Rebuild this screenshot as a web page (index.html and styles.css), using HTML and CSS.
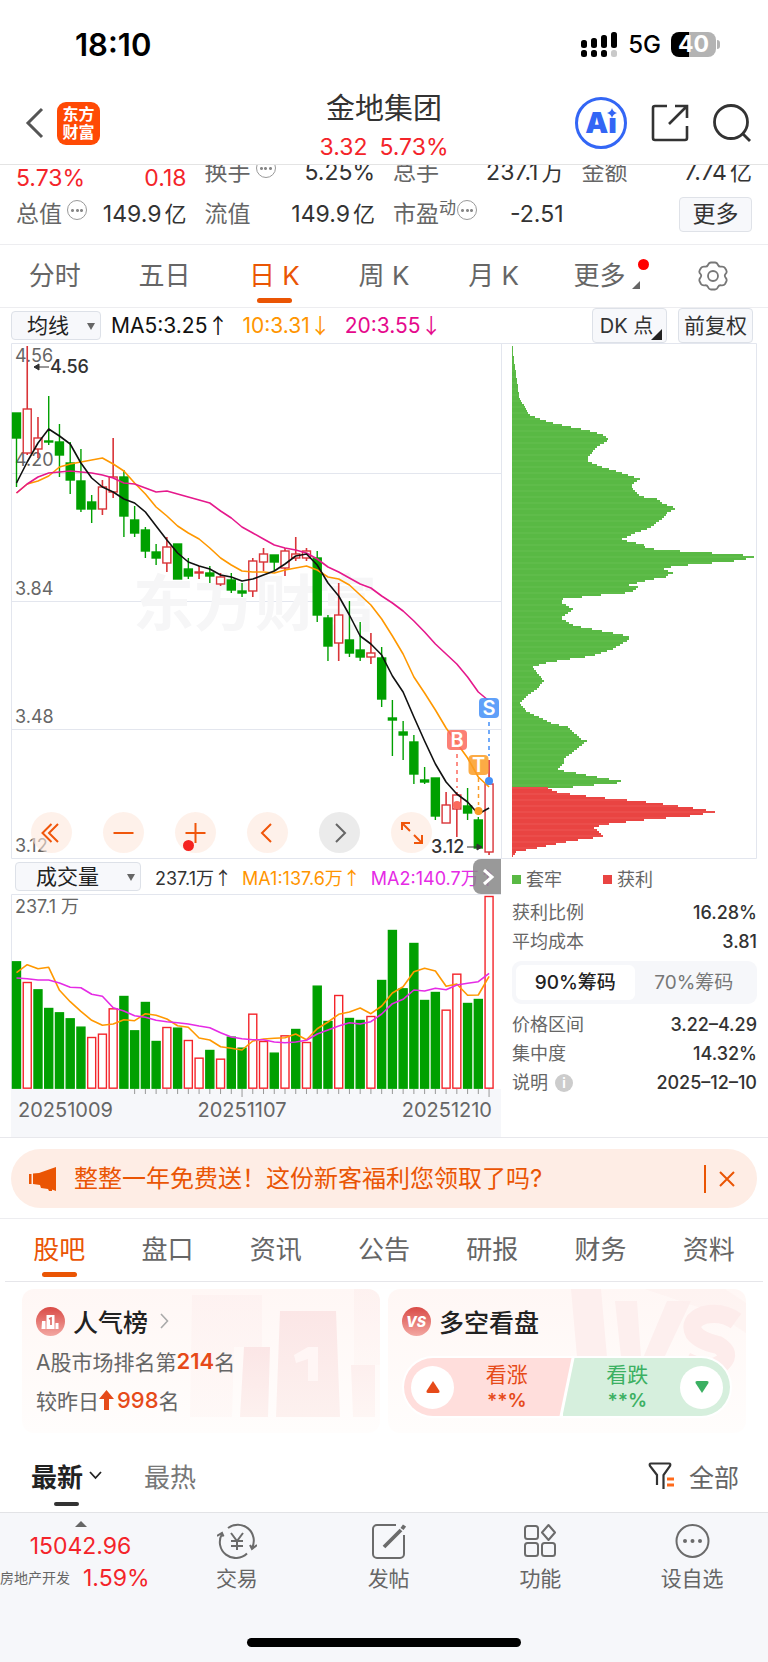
FILE: index.html
```html
<!DOCTYPE html>
<html lang="zh-CN">
<head>
<meta charset="utf-8">
<meta name="viewport" content="width=device-width, initial-scale=1">
<title>金地集团</title>
<link rel="stylesheet" href="styles.css">
</head>
<body>
<div class="status">
  <span class="clock">18:10</span>
  <div class="status-right">
    <svg class="signal" width="37" height="25" viewBox="0 0 37 25" aria-hidden="true">
      <g fill="#000"><rect x="0" y="8" width="6" height="8" rx="2.5"/><rect x="10" y="6" width="6" height="10" rx="2.5"/><rect x="20" y="3" width="6" height="13" rx="2.5"/><rect x="30" y="0" width="6" height="16" rx="2.5"/><rect x="0" y="18" width="6" height="7" rx="2.5"/><rect x="10" y="18" width="6" height="7" rx="2.5"/><rect x="20" y="18" width="6" height="7" rx="2.5"/></g>
      <rect x="30" y="18" width="6" height="7" rx="2.5" fill="#c9c9c9"/>
    </svg>
    <span class="network">5G</span>
    <span class="battery">40</span>
  </div>
</div>

<header class="header">
  <div class="header-left">
    <button class="icon-btn" aria-label="返回"><svg width="20" height="32" viewBox="0 0 20 32" fill="none" stroke="#555" stroke-width="3"><path d="M17 2 3 16l14 14"/></svg></button>
    <div class="logo"><span>东方</span><span>财富</span></div>
  </div>
  <div class="header-title">
    <h1>金地集团</h1>
    <p class="up"><span>3.32</span><span>5.73%</span></p>
  </div>
  <div class="header-right">
    <button class="icon-btn ai" aria-label="AI助手">Ai<svg width="10" height="10" viewBox="0 0 10 10" fill="#3366f5" aria-hidden="true"><path d="M5 0Q6 4 10 5Q6 6 5 10Q4 6 0 5Q4 4 5 0z"/></svg></button>
    <button class="icon-btn" aria-label="分享"><svg width="38" height="38" viewBox="0 0 38 38" fill="none" stroke="#333" stroke-width="2.6"><path d="M16 2H4a2 2 0 0 0-2 2v30a2 2 0 0 0 2 2h30a2 2 0 0 0 2-2V22M24 2h12v12M36 2 18 20"/></svg></button>
    <button class="icon-btn" aria-label="搜索"><svg width="38" height="38" viewBox="0 0 38 38" fill="none" stroke="#333" stroke-width="2.8"><circle cx="18" cy="18" r="16.5"/><path d="m29 29 8 8"/></svg></button>
  </div>
</header>

<section class="quotes">
  <div class="quote-grid">
    <div class="quote change up"><span>5.73%</span><span>0.18</span></div>
    <div class="quote"><span class="name">换手<i class="more-dot"></i></span><span>5.25%</span></div>
    <div class="quote"><span class="name">总手</span><span>237.1<small>万</small></span></div>
    <div class="quote"><span class="name">金额</span><span>7.74<small>亿</small></span></div>
    <div class="quote"><span class="name">总值<i class="more-dot"></i></span><span>149.9<small>亿</small></span></div>
    <div class="quote"><span class="name">流值</span><span>149.9<small>亿</small></span></div>
    <div class="quote neg"><span class="name">市盈<sup>动</sup><i class="more-dot"></i></span><span>-2.51</span></div>
    <div class="quote end"><button class="more-btn">更多</button></div>
  </div>
</section>

<nav class="period-tabs">
  <button>分时</button>
  <button>五日</button>
  <button class="active">日 K</button>
  <button>周 K</button>
  <button>月 K</button>
  <button><span class="with-badge">更多</span></button>
  <button aria-label="设置"><svg width="30" height="30" viewBox="0 0 30 30" fill="none" stroke="#777" stroke-width="1.8" stroke-linejoin="round"><path d="M10 4Q11 1.500 13 1.500h4Q19 1.500 20 4q1 2 3 1.600 3-.4 4 1.400l1.300 2.300q1 2-.7 3.500-1.600 1.700 0 3.900 1.700 2 .7 3.800L27 23q-1 1.700-4 1.300-2-.3-3 1.700-1 2.500-3 2.500h-4q-2 0-3-2.500-1-2-3-1.700-3 .4-4-1.300l-1.300-2.500q-1-1.800.7-3.800 1.600-2.200 0-3.900-1.700-1.500-.7-3.500L3 7q1-1.800 4-1.400 2 .4 3-1.600z"/><circle cx="15" cy="15" r="5"/></svg></button>
</nav>

<div class="ma-bar">
  <div class="select-box ma-select"><select aria-label="主图指标"><option>均线</option></select></div>
  <span class="ma5">MA5:3.25<b class="arr">↑</b></span>
  <span class="ma10">10:3.31<b class="arr">↓</b></span>
  <span class="ma20">20:3.55<b class="arr">↓</b></span>
  <div class="ma-actions">
    <button class="dk">DK 点</button>
    <button>前复权</button>
  </div>
</div>

<main class="charts">
  <div class="chart-col">
    <div class="kline">
      <svg id="kline" viewBox="0 0 490 516" role="img" aria-label="日K线图">
        <path class="grid" d="M0 130.500H490M0 258.500H490M0 386.500H490"/>
        <path class="frame" d="M490.500.5H.5V515.500H490"/>
        <text class="watermark" x="122" y="283">东方财富</text>
        <text class="axis-text" x="4" y="19">4.56</text>
        <text class="axis-text" x="4" y="123">4.20</text>
        <text class="axis-text" x="4" y="252">3.84</text>
        <text class="axis-text" x="4" y="380">3.48</text>
        <text class="axis-text" x="4" y="509">3.12</text>
        <g id="candles"></g>
        <g id="ma-lines"></g>
        <g class="mark"><path d="M23 24H38M28 21 23 24l5 3z"/><text x="39" y="30">4.56</text></g>
        <g class="mark"><path d="M456 504H470M466 501l5 3-5 3z"/><text x="420" y="510">3.12</text></g>
        <g class="flag flag-s"><path d="M478 379V413"/><circle cx="478" cy="438" r="4"/><rect x="468" y="355" width="20" height="20" rx="4"/><text x="478" y="372">S</text></g>
        <g class="flag flag-b"><path d="M446 411V445"/><circle cx="446" cy="462" r="4"/><rect x="436" y="387" width="20" height="20" rx="4"/><text x="446" y="404">B</text></g>
        <g class="flag flag-t"><path d="M467.500 435V462"/><circle cx="467.500" cy="468" r="4"/><rect x="457.500" y="412" width="20" height="20" rx="4"/><text x="467.500" y="429">T</text></g>
      </svg>
      <div class="chart-tools">
        <button aria-label="快退"><svg viewBox="0 0 41 41"><path d="M20.500 12l-9 9 9 9M27 12l-9 9 9 9"/></svg></button>
        <button aria-label="缩小"><svg viewBox="0 0 41 41"><path d="M10.500 21h20"/></svg></button>
        <button class="dot" aria-label="放大"><svg viewBox="0 0 41 41"><path d="M10.500 21h20M20.500 11v20"/></svg></button>
        <button aria-label="左移"><svg viewBox="0 0 41 41"><path d="M24 12l-9 9 9 9"/></svg></button>
        <button class="gray" aria-label="右移"><svg viewBox="0 0 41 41"><path d="M17 12l9 9-9 9"/></svg></button>
        <button aria-label="全屏"><svg viewBox="0 0 41 41"><path d="M11 18v-7h8M11 11l8 8M23 23l8 8M31 23v8h-8"/></svg></button>
      </div>
    </div>
    <div class="vol-bar">
      <div class="select-box vol-select"><select aria-label="副图指标"><option>成交量</option></select></div>
      <span>237.1万<b class="arr">↑</b></span>
      <span class="ma10">MA1:137.6万<b class="arr">↑</b></span>
      <span class="vol-ma2">MA2:140.7万<b class="arr">↑</b></span>
      <button class="vol-next" aria-label="展开"><svg width="28" height="36" viewBox="0 0 28 36" fill="none" stroke="#fff" stroke-width="3"><path d="M11 11l8 7-8 7"/></svg></button>
    </div>
    <svg id="volume" viewBox="0 0 490 195" role="img" aria-label="成交量">
      <path class="frame" d="M490.500 195V.5H.5V195"/>
      <text class="axis-text" x="4" y="19">237.1 万</text>
      <g id="vol-bars"></g>
      <g id="vol-lines"></g>
    </svg>
    <svg id="dates" viewBox="0 0 490 48" role="img" aria-label="日期">
      <g id="ticks"></g>
      <text class="date" x="7" y="28">20251009</text>
      <text class="date middle" x="231" y="28">20251107</text>
      <text class="date end" x="481" y="28">20251210</text>
    </svg>
  </div>

  <aside class="chip-col">
    <svg id="chips" viewBox="0 0 256 516" role="img" aria-label="筹码分布">
      <path class="frame" d="M0 .5H255.500V515.500H0M.5 0V516"/>
    </svg>
    <div class="legend"><span class="trapped">套牢</span><span class="profit">获利</span></div>
    <dl class="stats">
      <div><dt>获利比例</dt><dd>16.28%</dd></div>
      <div><dt>平均成本</dt><dd>3.81</dd></div>
    </dl>
    <div class="segment"><button class="active">90%筹码</button><button>70%筹码</button></div>
    <dl class="stats">
      <div><dt>价格区间</dt><dd>3.22–4.29</dd></div>
      <div><dt>集中度</dt><dd>14.32%</dd></div>
      <div><dt>说明<i class="info">i</i></dt><dd>2025–12–10</dd></div>
    </dl>
  </aside>
</main>

<section class="banner-wrap">
  <div class="banner">
    <svg width="28" height="24" viewBox="0 0 28 24" fill="#ea5504" aria-hidden="true"><rect x="0" y="7" width="2.500" height="10"/><path d="M4 6.500 10 6 27 0v24l-4-1.500V24h-3l-1-2-7-1-1-3-7-1z"/></svg>
    <a href="#">整整一年免费送！这份新客福利您领取了吗?</a>
    <button aria-label="关闭"><svg width="16" height="16" viewBox="0 0 16 16" stroke="#ea5504" stroke-width="2"><path d="M1 1l14 14M15 1 1 15"/></svg></button>
  </div>
</section>

<nav class="info-tabs">
  <button class="active">股吧</button>
  <button>盘口</button>
  <button>资讯</button>
  <button>公告</button>
  <button>研报</button>
  <button>财务</button>
  <button>资料</button>
</nav>

<section class="cards">
  <article class="card">
    <svg class="card-art" width="190" height="144" viewBox="0 0 190 144" aria-hidden="true"><defs><linearGradient id="fade" x2="0" y2="1"><stop stop-color="#fdefee"/><stop offset="1" stop-color="#fef6f4"/></linearGradient><linearGradient id="fade2" x2="0" y2="1"><stop stop-color="#fbe6e6"/><stop offset="1" stop-color="#fdf1ef"/></linearGradient></defs><g fill="url(#fade)"><path d="M2 6h70v52H44l-2 70H0z" opacity=".6"/><path d="M54 58h26l-2 70H50z" fill="url(#fade2)"/><path d="M90 22h56l4 106H86z" fill="url(#fade2)"/><path d="M164 0h26v76h-26z" opacity=".7"/><path d="M161 76h24v52h-22z"/></g><path d="M104 66l14-8h10v34h-10V70l-12 4z" fill="#fff6f5"/></svg>
    <h2><svg width="29" height="29" viewBox="0 0 29 29" aria-hidden="true"><defs><linearGradient id="g1" x2="0" y2="1"><stop stop-color="#d94b46"/><stop offset="1" stop-color="#f3a7a2"/></linearGradient></defs><circle cx="14.500" cy="14.500" r="14.500" fill="url(#g1)"/><path d="M10.500 8h8v14h-8zM6 14h3.500v8H5.500zM19.500 16h3v6h-3z" fill="#fff"/><path d="M13 12l2-1v7" fill="none" stroke="#dc6560" stroke-width="1.600"/></svg>人气榜<svg width="9" height="16" viewBox="0 0 9 16" fill="none" stroke="#aaa" stroke-width="1.600" aria-hidden="true"><path d="M1 1l6.500 7L1 15"/></svg></h2>
    <p>A股市场排名第<b>214</b>名</p>
    <p>较昨日<svg width="15" height="20" viewBox="0 0 15 20" fill="#e64a19" aria-hidden="true"><path d="M7.500 0 15 9h-5v11H5V9H0z"/></svg><b class="mid">998</b>名</p>
  </article>
  <article class="card">
    <svg class="card-art" width="175" height="144" viewBox="0 0 175 144" aria-hidden="true"><g fill="#fdefee"><path d="M0 0h30l6 68H6zM44 12h22l4 56H50zM96 12h24L84 88H64z"/><path d="M74 0h80l21 14v30l-30-20z" opacity=".5"/></g><path d="M165 32q-14-10-32-6-16 6-10 18 6 8 24 12 14 8 4 18-12 10-36-2" fill="none" stroke="#fdeceb" stroke-width="18"/></svg>
    <h2><svg width="29" height="29" viewBox="0 0 29 29" aria-hidden="true"><circle cx="14.500" cy="14.500" r="14.500" fill="url(#g1)"/><text x="14" y="20" class="vs">VS</text></svg>多空看盘</h2>
    <div class="vote">
      <button class="vote-up"><i><svg width="14" height="12" viewBox="0 0 14 12" fill="#e64a19"><path d="M7 0l6.500 10q.5 2-1.500 2H2Q0 12 .5 10z"/></svg></i><span>看涨<em>**%</em></span></button>
      <button class="vote-down"><span>看跌<em>**%</em></span><i><svg width="14" height="12" viewBox="0 0 14 12" fill="#3bb062"><path d="M7 12 .5 2Q0 0 2 0h10q2 0 1.500 2z"/></svg></i></button>
    </div>
  </article>
</section>

<section class="feed-bar">
  <button class="active">最新<svg width="13" height="9" viewBox="0 0 13 9" fill="none" stroke="#222" stroke-width="1.800" aria-hidden="true"><path d="M1 1l5.500 6L12 1"/></svg></button>
  <button>最热</button>
  <button class="filter"><svg width="26" height="28" viewBox="0 0 26 28" fill="none" stroke="#333" stroke-width="2.200" aria-hidden="true"><path d="M9 23V13L2 4q-1-2.500 1-2.500h18q2 0 1 2.500l-6.500 9v14"/><path d="M19 17h7M19 23h7" stroke="#ff6a1a" stroke-width="3"/></svg>全部</button>
</section>

<footer class="bottom">
  <div class="toolbar">
    <a class="index" href="#">
      <i class="tri"></i>
      <strong>15042.96</strong>
      <span><small>房地产开发</small>1.59%</span>
    </a>
    <a href="#"><svg width="40" height="36" viewBox="0 0 40 36" fill="none" stroke="#6b6b6b" stroke-width="2"><path d="M11 5A16 16 0 0 1 35 25M30 30.500A16 16 0 0 1 5 11M0 13l5-3 1.500 3.500M40 22l-5 4-2-4M14 10l6 8 6-8M20 18v9M14 18h12M14 23h12"/></svg>交易</a>
    <a href="#"><svg width="34" height="36" viewBox="0 0 34 36" fill="none" stroke="#6b6b6b" stroke-width="2"><path d="M24 2H5a4 4 0 0 0-4 4v25a4 4 0 0 0 4 4h23a4 4 0 0 0 4-4V12"/><path d="M12 24 29 7M30 6l2.500-3.500" stroke-width="3.800"/></svg>发帖</a>
    <a href="#"><svg width="32" height="34" viewBox="0 0 32 34" fill="none" stroke="#6b6b6b" stroke-width="2"><rect x="1" y="2" width="13" height="13" rx="2.500"/><rect x="1" y="19" width="13" height="13" rx="2.500"/><rect x="18" y="19" width="13" height="13" rx="2.500"/><path d="M24.500 1 31 8.500l-6.500 7.500L18 8.500z" stroke-linejoin="round"/></svg>功能</a>
    <a href="#"><svg width="35" height="35" viewBox="0 0 35 35" fill="none" stroke="#6b6b6b" stroke-width="2"><circle cx="17.500" cy="17.500" r="16"/><g fill="#6b6b6b" stroke="none"><circle cx="10" cy="17.500" r="2"/><circle cx="17.500" cy="17.500" r="2"/><circle cx="25" cy="17.500" r="2"/></g></svg>设自选</a>
  </div>
  <div class="home"></div>
</footer>
<script src="chart.js"></script>
</body>
</html>
```
FILE: styles.css
```css
* { box-sizing: border-box; }
body {
  margin: 0;
  background: #fff;
  color: #333;
  font-family: Inter, "Noto Sans CJK SC", sans-serif;
  font-size: 22px;
}
button, select {
  font: inherit;
  color: inherit;
  border: 0;
  padding: 0;
  background: none;
}
h1, h2, p, dl, dd { margin: 0; font-weight: 400; }
a { color: inherit; text-decoration: none; }
i, em { font-style: normal; }
svg { display: block; flex: none; }
.up { color: #f4242a; }

/* status bar */
.status {
  display: flex;
  justify-content: space-between;
  align-items: center;
  height: 88px;
  padding: 0 52px 0 75px;
  color: #000;
}
.clock { font-size: 31px; font-weight: 600; }
.status-right { display: flex; align-items: center; gap: 10px; }
.network { font-size: 24px; font-weight: 500; }
.battery {
  position: relative;
  width: 45px;
  height: 25px;
  border-radius: 8px;
  background: linear-gradient(90deg, #000 40%, #b3b3b3 40%);
  color: #fff;
  font-size: 23px;
  font-weight: 700;
  line-height: 25px;
  text-align: center;
}
.battery::after {
  content: "";
  position: absolute;
  left: 46px;
  top: 8px;
  width: 3px;
  height: 9px;
  border-radius: 0 3px 3px 0;
  background: #b3b3b3;
}

/* header */
.header {
  display: grid;
  grid-template-columns: 1fr auto 1fr;
  height: 77px;
  padding: 0 17px;
  border-bottom: 1px solid #e4e4e4;
}
.header-left, .header-right { display: flex; align-items: center; padding-bottom: 8px; }
.header-left { gap: 12px; padding-left: 8px; }
.header-right { justify-content: flex-end; gap: 24px; }
.header-title { text-align: center; padding-top: 2px; }
.header-title h1 { font-size: 29px; line-height: 38px; }
.header-title p { display: flex; justify-content: center; gap: 12px; font-size: 23px; line-height: 38px; }
.logo {
  display: flex;
  flex-direction: column;
  align-items: center;
  justify-content: center;
  width: 43px;
  height: 43px;
  border-radius: 9px;
  background: #ff4a05;
  color: #fff;
  font-size: 16px;
  font-weight: 700;
  line-height: 18px;
}
.ai {
  position: relative;
  width: 52px;
  height: 52px;
  border: 3px solid #3366f5;
  border-radius: 50%;
  color: #3366f5;
  font-size: 29px;
  font-weight: 900;
  line-height: 46px;
}
.ai svg { position: absolute; right: 7px; top: 8px; background: #fff; }

/* quotes */
.quotes { height: 79px; overflow: hidden; }
.quote-grid {
  display: grid;
  grid-template-columns: repeat(4, 1fr);
  grid-auto-rows: 42px;
  column-gap: 18px;
  margin-top: -14px;
  padding: 0 16px;
}
.quote { display: flex; justify-content: space-between; align-items: center; font-size: 23px; line-height: 42px; white-space: nowrap; }
.quote small { font-size: 22px; margin-left: 3px; }
.quote .name { display: flex; color: #666; }
.quote.change { padding-top: 12px; }
.quote.end { justify-content: flex-end; }
.quote sup { font-size: 17px; line-height: 30px; vertical-align: top; }
.more-dot {
  width: 20px;
  height: 20px;
  margin: 7px 0 0 5px;
  border: 1px solid #999;
  border-radius: 50%;
  background: radial-gradient(circle, #888 1px, transparent 2px) center / 5px 5px no-repeat, radial-gradient(circle, #888 1px, transparent 2px) 2px center / 5px 5px no-repeat, radial-gradient(circle, #888 1px, transparent 2px) 11px center / 5px 5px no-repeat;
}
.quote sup + .more-dot { margin-left: 1px; }
.more-btn {
  width: 73px;
  height: 35px;
  border: 1px solid #dfe2e8;
  border-radius: 4px;
  background: #f7f8fb;
  font-size: 23px;
  line-height: 32px;
}

/* tab rows */
.period-tabs, .info-tabs {
  display: grid;
  grid-template-columns: repeat(7, 1fr);
  border-top: 1px solid #ededf0;
  border-bottom: 1px solid #ededf0;
  color: #666;
  font-size: 26px;
}
.period-tabs button, .info-tabs button {
  position: relative;
  display: flex;
  align-items: center;
  justify-content: center;
  height: 62px;
  line-height: 62px;
}
.period-tabs .active, .info-tabs .active { color: #ea5504; }
.period-tabs .active::after, .info-tabs .active::after {
  content: "";
  position: absolute;
  bottom: 4px;
  width: 35px;
  height: 5px;
  border-radius: 3px;
  background: #ea5504;
}
.with-badge { position: relative; padding-right: 8px; }
.with-badge::before {
  content: "";
  position: absolute;
  right: -16px;
  top: 14px;
  width: 11px;
  height: 11px;
  border-radius: 50%;
  background: #f00;
}
.with-badge::after {
  content: "";
  position: absolute;
  right: -7px;
  top: 36px;
  border-left: 8px solid transparent;
  border-bottom: 8px solid #666;
}

/* indicator bar */
.ma-bar { display: flex; align-items: center; height: 35px; padding: 0 15px 0 11px; font-size: 21px; white-space: nowrap; }
.arr { font-weight: 400; font-family: "Noto Sans CJK SC", sans-serif; display: inline-block; width: 18px; line-height: 1; text-align: center; }
.select-box {
  position: relative;
  height: 29px;
  border: 1px solid #dde1e8;
  border-radius: 4px;
  background: #f7f8fb;
}
.select-box select { width: 100%; height: 27px; appearance: none; color: #222; font-size: 21px; line-height: 27px; }
.select-box::after {
  content: "";
  position: absolute;
  right: 5px;
  top: 11px;
  border: 4px solid transparent;
  border-top: 7px solid #666;
  border-bottom: 0;
  pointer-events: none;
}
.ma-select { width: 90px; }
.ma-select select { padding-left: 15px; }
.ma5 { margin-left: 10px; color: #111; }
.ma10 { color: #ff9500; }
.ma20 { color: #e5098c; }
.ma-bar .ma10, .ma-bar .ma20 { margin-left: 17px; }
.ma-actions { display: flex; gap: 11px; margin-left: auto; }
.ma-actions button {
  position: relative;
  width: 75px;
  height: 35px;
  border: 1px solid #dde1e8;
  border-radius: 4px;
  background: #f7f8fb;
  font-size: 21px;
  line-height: 32px;
}
.ma-actions .dk { padding-right: 6px; font-size: 20px; }
.dk::after {
  content: "";
  position: absolute;
  right: 4px;
  bottom: 2px;
  border-left: 11px solid transparent;
  border-bottom: 11px solid #222;
}

/* charts */
.charts {
  display: grid;
  grid-template-columns: 490fr 256fr;
  padding: 0 11px;
  border-bottom: 1px solid #e8e8ec;
}
.charts > * { min-width: 0; }
.charts svg text { font-family: Inter, "Noto Sans CJK SC", sans-serif; }
.kline { position: relative; }
#kline, #volume, #chips, #dates { width: 100%; height: auto; }
.grid, .frame { fill: none; stroke: #e3e6ee; stroke-width: 1; }
.axis-text { font-size: 18px; fill: #666; }
.watermark { font-size: 61px; font-weight: 700; fill: #f6f6f7; }
.line { fill: none; stroke-width: 1.6; stroke-linejoin: round; }
.line-ma5 { stroke: #111; }
.line-ma10 { stroke: #ff9800; }
.line-ma20 { stroke: #e5198c; }
.line-vol { stroke: #e52be5; }
.fall { fill: #00a000; stroke: #00a000; stroke-width: 1.4; }
.rise { fill: #fff; stroke: #d93438; stroke-width: 1.4; }
.rise-wick { stroke: #d93438; stroke-width: 1.6; }
.vol-rise { fill: #fff; stroke: #f4242a; stroke-width: 1.4; }
.mark { fill: #333; stroke: #333; }
.mark text { stroke: none; font-size: 18px; font-weight: 500; }
.flag path { fill: none; stroke-width: 1.5; stroke-dasharray: 4 4; }
.flag rect { opacity: .85; }
.flag text { fill: #fff; font-size: 20px; font-weight: 600; text-anchor: middle; }
.flag-s { fill: #438ff8; }
.flag-s path { stroke: #438ff8; }
.flag-b { fill: #fb6a5e; }
.flag-b path { stroke: #fb6a5e; }
.flag-t { fill: #fb9c25; }
.flag-t path { stroke: #fb9c25; }
.chart-tools { position: absolute; left: 20px; bottom: 6px; display: flex; gap: 31px; }
.chart-tools button { position: relative; width: 41px; height: 41px; border-radius: 50%; background: rgba(253, 231, 220, .6); }
.chart-tools svg { fill: none; stroke: #f0560b; stroke-width: 2; }
.chart-tools .gray { background: rgba(222, 222, 222, .6); }
.chart-tools .gray svg { stroke: #666; }
.dot::after {
  content: "";
  position: absolute;
  left: 8px;
  bottom: 2px;
  width: 11px;
  height: 11px;
  border-radius: 50%;
  background: #f5221f;
}
.vol-bar { position: relative; display: flex; align-items: center; height: 35px; padding-left: 4px; font-size: 18px; white-space: nowrap; overflow: hidden; }
.vol-select { width: 126px; margin-right: 14px; }
.vol-select select { padding-left: 20px; }
.vol-bar .ma10, .vol-ma2 { margin-left: 10px; }
.vol-ma2 { color: #e52be5; }
.vol-next { position: absolute; right: 0; top: 0; height: 35px; border-radius: 8px 0 0 8px; background: rgba(135, 135, 135, .85); }
#dates { background: #f6f7fa; }
.tick { stroke: #999; }
.date { fill: #666; font-size: 20px; }
.date.middle { text-anchor: middle; }
.date.end { text-anchor: end; }

/* chip panel */
.green-bar { fill: #59b944; }
.green-bar.alt { fill: #5fbc4a; }
.red-bar { fill: #e94442; }
.red-bar.alt { fill: #eb4d4b; }
.green-bar, .red-bar { shape-rendering: crispEdges; }
.legend, .stats, .segment { margin-left: 11px; }
.legend { display: flex; height: 39px; padding-bottom: 2px; align-items: center; color: #666; font-size: 18px; }
.legend span { width: 91px; }
.legend span::before { content: ""; display: inline-block; width: 9px; height: 9px; margin-right: 5px; background: #59b944; vertical-align: 2px; }
.legend .profit::before { background: #e94442; }
.stats div { display: flex; justify-content: space-between; font-size: 18px; line-height: 29px; }
.stats dt { display: flex; align-items: center; color: #666; }
.stats dd { font-weight: 500; }
.info { width: 18px; height: 18px; margin-left: 7px; border-radius: 50%; background: #ccc; color: #fff; font-size: 13px; font-weight: 700; line-height: 18px; text-align: center; }
.segment { display: flex; height: 43px; margin-top: 5px; margin-bottom: 6px; padding: 4px; border-radius: 9px; background: #f6f7fa; font-size: 19px; line-height: 35px; }
.segment button { flex: 1; border-radius: 6px; color: #777; }
.segment .active { background: #fff; color: #222; font-weight: 500; }

/* banner */
.banner-wrap { padding: 11px 11px 10px; }
.banner { display: flex; align-items: center; height: 59px; padding: 0 22px 0 18px; border-radius: 30px; background: #feede5; color: #ea5504; }
.banner a { flex: 1; margin-left: 17px; font-size: 24px; line-height: 36px; }
.banner button { padding: 6px 0 6px 13px; border-left: 2px solid #ea5504; }
.info-tabs { padding: 0 5px; border-bottom: 0; }
.info-tabs::after { content: ""; grid-column: 1 / -1; height: 1px; background: #e6e6ea; }

/* cards */
.cards { display: grid; grid-template-columns: 1fr 1fr; gap: 8px; padding: 7px 22px 0; }
.card { position: relative; overflow: hidden; height: 144px; padding: 12px 14px; border-radius: 12px; background: linear-gradient(#fff7f5, #fffdfc); }
.card-art { position: absolute; right: 0; top: 0; }
.card h2, .card p, .vote { position: relative; }
.card h2 { display: flex; align-items: center; gap: 8px; height: 40px; color: #222; font-size: 25px; font-weight: 500; }
.card h2 svg + svg { margin-left: 4px; }
.card p { display: flex; align-items: center; height: 39px; color: #666; font-size: 21px; }
.card p b { color: #e64a19; font-size: 22px; font-weight: 600; }
.card .mid { margin-left: 3px; font-weight: 500; }
.vs { fill: #fff; font-size: 14px; font-weight: 800; font-style: italic; text-anchor: middle; }
.vote { display: flex; margin-top: 15px; height: 62px; padding: 2px; border-radius: 31px; background: #fff; }
.vote button { display: flex; align-items: center; flex: 1; height: 58px; color: #e64a19; font-size: 21px; line-height: 26px; }
.vote i { display: flex; align-items: center; justify-content: center; width: 43px; height: 43px; border-radius: 50%; background: #fff; }
.vote span { flex: 1; text-align: center; }
.vote em { display: block; font-weight: 600; font-size: 19px; line-height: 25px; }
.vote-up { padding: 0 12px 0 7px; border-radius: 29px 0 0 29px; background: #ffdedc; clip-path: polygon(0 0, 100% 0, calc(100% - 12px) 100%, 0 100%); }
.vote .vote-down { margin-left: -9px; padding: 0 7px 0 12px; border-radius: 0 29px 29px 0; background: #d6efdd; color: #3bb062; clip-path: polygon(12px 0, 100% 0, 100% 100%, 0 100%); }

/* feed bar */
.feed-bar { display: flex; height: 79px; padding: 6px 29px 0 31px; color: #777; font-size: 26px; }
.feed-bar button { position: relative; display: flex; align-items: center; height: 73px; margin-right: 42px; }
.feed-bar .active { gap: 6px; color: #222; font-weight: 700; }
.feed-bar .active::after { content: ""; position: absolute; left: 23px; bottom: 6px; width: 25px; height: 4px; border-radius: 2px; background: #333; }
.feed-bar .filter { gap: 15px; margin: 0 0 0 auto; font-size: 25px; color: #666; }

/* bottom bar */
.bottom { min-height: 150px; border-top: 1px solid #e2e3e6; background: #f6f7fa; }
.toolbar { display: grid; grid-template-columns: 161px repeat(4, 1fr); }
.toolbar a { display: flex; flex-direction: column; align-items: center; height: 88px; padding-top: 10px; color: #666; font-size: 21px; line-height: 32px; }
.toolbar a > svg { height: 36px; margin-bottom: 4px; }
.toolbar .index { align-items: stretch; color: #f4242a; font-size: 23px; text-align: center; padding-top: 8px; }
.index strong { font-weight: 400; line-height: 38px; }
.index span { display: flex; align-items: center; gap: 13px; line-height: 26px; }
.index small { color: #666; font-size: 14px; white-space: nowrap; }
.tri { align-self: center; border: 6px solid transparent; border-top: 0; border-bottom: 6px solid #666; }
.home { width: 274px; height: 9px; margin: 37px auto 0; border-radius: 5px; background: #000; }
```
FILE: chart.js
```js
const NS = "http://www.w3.org/2000/svg";
const STEP = 10.74;
const FIRST = 5.5;
const xAt = (i) => FIRST + i * STEP;

function add(parent, tag, attrs) {
  const node = document.createElementNS(NS, tag);
  for (const key in attrs) node.setAttribute(key, attrs[key]);
  document.getElementById(parent).appendChild(node);
}

function line(parent, cls, values) {
  add(parent, "polyline", {
    class: "line " + cls,
    points: values.map((v, i) => xAt(i).toFixed(1) + "," + v.toFixed(1)).join(" "),
  });
}

/* direction, high, body top, body bottom, low */
const candles = [
  ["g", 70, 70, 95, 144], ["r", 3, 66, 110, 112], ["r", 74, 95, 106, 115], ["g", 53, 98, 99, 102],
  ["g", 81, 99, 112, 134], ["g", 99, 120, 137, 151], ["g", 106, 138, 166, 169], ["g", 152, 159, 166, 180],
  ["r", 137, 144, 166, 172], ["r", 95, 134, 149, 155], ["g", 127, 134, 173, 194], ["g", 163, 177, 190, 194],
  ["g", 184, 187, 208, 215], ["g", 201, 209, 215, 222], ["r", 194, 204, 220, 229], ["g", 201, 201, 236, 236],
  ["g", 215, 226, 233, 236], ["r", 223, 229, 230, 236], ["g", 223, 230, 233, 240], ["r", 230, 234, 241, 243],
  ["g", 230, 237, 247, 250], ["g", 240, 248, 250, 254], ["r", 215, 218, 248, 254], ["r", 205, 211, 219, 228],
  ["g", 212, 212, 219, 228], ["r", 205, 208, 225, 233], ["r", 194, 211, 215, 218], ["r", 205, 208, 215, 218],
  ["g", 208, 215, 272, 279], ["g", 272, 275, 303, 318], ["r", 240, 272, 300, 318], ["g", 258, 297, 310, 314],
  ["g", 279, 307, 314, 318], ["r", 290, 310, 314, 321], ["g", 304, 315, 356, 364], ["g", 357, 375, 377, 413],
  ["g", 378, 389, 392, 417], ["g", 392, 399, 431, 441], ["g", 424, 437, 439, 441], ["g", 435, 435, 473, 477],
  ["r", 449, 462, 480, 480], ["r", 449, 452, 466, 494], ["g", 445, 463, 470, 477], ["g", 474, 477, 505, 505],
  ["r", 417, 441, 509, 512],
];

candles.forEach(([dir, high, top, bottom, low], i) => {
  const x = xAt(i);
  const rise = dir === "r";
  add("candles", "path", {
    class: rise ? "rise-wick" : "fall",
    d: `M${x} ${high}V${top}M${x} ${bottom}V${low}`,
  });
  add("candles", "rect", {
    class: rise ? "rise" : "fall",
    x: x - 4, y: top, width: 8, height: Math.max(bottom - top, 0.5),
  });
});

line("ma-lines", "line-ma10", [150, 141, 138, 133, 124, 121, 119, 117, 115, 121, 128, 140, 151, 164, 173, 183, 190, 196, 205, 215, 222, 228, 229, 229, 230, 227, 225, 223, 227, 234, 236, 242, 252, 262, 276, 293, 311, 334, 350, 367, 385, 400, 415, 434, 444]);
line("ma-lines", "line-ma20", [150, 141, 134, 130, 129, 128, 129, 130, 132, 135, 140, 141, 145, 149, 148, 151, 154, 157, 160, 168, 175, 184, 190, 196, 202, 205, 207, 210, 216, 224, 229, 235, 241, 245, 253, 260, 268, 278, 289, 301, 311, 321, 334, 349, 358]);
line("ma-lines", "line-ma5", [140, 119, 100, 86, 93, 101, 120, 135, 144, 149, 156, 160, 169, 183, 197, 210, 219, 223, 226, 232, 234, 238, 236, 232, 228, 221, 213, 211, 222, 240, 253, 272, 293, 301, 312, 333, 349, 374, 398, 421, 439, 451, 459, 471, 465]);

/* volume panel: distances from the top of the block, three units per pixel */
const volY = (v) => v / 3 - 38;
const BASE = 698;
const volumes = "g316 r378 g400 g456 g469 g487 g512 r543 r533 r457 g420 g523 g438 g555 r513 g515 r552 r605 g582 r608 g542 g575 r473 r555 g590 r538 g519 r558 g389 g495 r417 g486 g492 r480 g372 g222 g397 g261 g432 g408 r461 r353 g441 g429 r120".split(" ");
volumes.forEach((item, i) => {
  const top = Number(item.slice(1));
  add("vol-bars", "rect", {
    class: item[0] === "r" ? "vol-rise" : "fall",
    x: xAt(i) - 4, y: volY(top) + 0.5, width: 8, height: (BASE - top) / 3 - 1,
  });
});
line("vol-lines", "line-ma10", [350, 326, 338, 334, 403, 437, 466, 493, 508, 504, 491, 494, 473, 478, 489, 509, 514, 546, 552, 572, 577, 582, 555, 549, 547, 545, 534, 551, 518, 498, 475, 468, 456, 473, 450, 411, 392, 347, 337, 345, 391, 384, 418, 417, 361].map(volY));
line("vol-lines", "line-vol", [366, 368, 372, 372, 381, 394, 395, 415, 421, 455, 465, 479, 484, 493, 497, 500, 504, 510, 515, 530, 543, 548, 551, 551, 558, 560, 558, 553, 534, 522, 510, 500, 504, 497, 474, 443, 430, 402, 405, 397, 401, 387, 382, 377, 352].map(volY));

for (let i = 11; i < 45; i++) {
  const major = i === 21 || i === 44;
  add("ticks", "path", { class: "tick", d: `M${xAt(i)} 0V${major ? 8 : 5}` });
}

/* chip distribution outline: [reach, depth] */
const green = [[36,16],[58,168],[88,218],[140,238],[200,252],[270,266],[306,276],[324,288],[322,296],[292,312],[264,344],[264,356],[310,374],[360,388],[422,409],[404,418],[393,430],[420,460],[446,463],[474,468],[486,480],[529,495],[500,510],[490,525],[466,540],[450,553],[410,566],[364,587],[388,594],[432,602],[430,608],[468,617],[550,622],[632,627],[716,632],[769,637],[750,643],[695,652],[570,662],[485,672],[522,688],[500,693],[506,697],[450,706],[388,722],[414,728],[405,738],[366,748],[295,752],[240,758],[188,762],[187,775],[221,794],[181,820],[222,842],[290,855],[340,864],[387,873],[387,884],[335,913],[277,932],[210,941],[150,950],[124,956],[99,965],[131,1006],[110,1030],[80,1050],[59,1072],[80,1096],[158,1132],[203,1142],[246,1180],[261,1183],[190,1238],[193,1248],[170,1270],[200,1273],[290,1290],[352,1300],[384,1305],[324,1310],[264,1315],[204,1321]];
const red = [[142,1322],[175,1336],[290,1350],[404,1360],[500,1371],[610,1386],[649,1393],[575,1405],[450,1415],[308,1431],[283,1441],[312,1466],[208,1480],[100,1502],[50,1511],[36,1526]];

function profile(points, cls) {
  const scaled = points.map(([x, y]) => [(x - 36) / 3, y * 0.338 - 3]);
  let k = 0;
  let n = 0;
  const end = scaled[scaled.length - 1][1];
  for (let y = Math.ceil(scaled[0][1]); y < end; y += 2) {
    while (k < scaled.length - 2 && scaled[k + 1][1] < y) k++;
    const [x0, y0] = scaled[k];
    const [x1, y1] = scaled[k + 1];
    const width = x0 + ((x1 - x0) * (y - y0)) / (y1 - y0);
    add("chips", "rect", {
      class: cls + (n++ % 3 === 0 ? " alt" : ""),
      x: 11, y: y, width: Math.max(width, 0.5), height: 2,
    });
  }
}
profile(green, "green-bar");
profile(red, "red-bar");
```
